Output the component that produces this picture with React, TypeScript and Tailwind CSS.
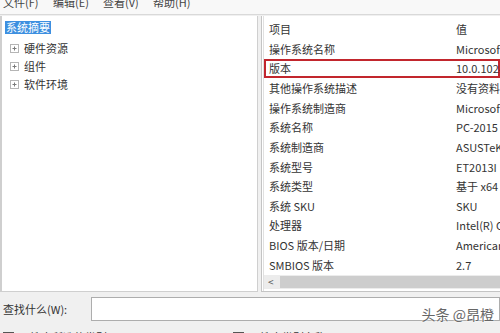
const menus = ["文件(F)", "编辑(E)", "查看(V)", "帮助(H)"];

const treeItems = ["硬件资源", "组件", "软件环境"];

const rows: [string, string][] = [
  ["操作系统名称", "Microsoft Windows 10 专业版"],
  ["版本", "10.0.10240 版本 10240"],
  ["其他操作系统描述", "没有资料"],
  ["操作系统制造商", "Microsoft Corporation"],
  ["系统名称", "PC-2015"],
  ["系统制造商", "ASUSTeK COMPUTER INC."],
  ["系统型号", "ET2013I"],
  ["系统类型", "基于 x64 的电脑"],
  ["系统 SKU", "SKU"],
  ["处理器", "Intel(R) Core(TM)"],
  ["BIOS 版本/日期", "American Megatrends"],
  ["SMBIOS 版本", "2.7"],
];

function PlusBox() {
  return (
    <svg width="9" height="9" viewBox="0 0 9 9" className="shrink-0">
      <rect x="0.5" y="0.5" width="8" height="8" fill="#fff" stroke="#b5b5b5" />
      <path d="M2.5 4.5h4M4.5 2.5v4" stroke="#7a7a7a" strokeWidth="1" />
    </svg>
  );
}

export default function App() {
  return (
    <div
      className="flex h-[333px] w-[500px] flex-col overflow-hidden bg-[#f0f0f0] text-[11px] text-[#333]"
      style={{ fontFamily: '"Noto Sans CJK SC", "Liberation Sans", sans-serif' }}
    >
      {/* menu bar, top half cut off */}
      <div className="flex h-[15px] shrink-0 items-start overflow-hidden border-b border-[#d9d9d9] bg-[#f8f8f8] pl-[3px]">
        {menus.map((m) => (
          <span key={m} className="mt-[-5px] w-[50px] leading-[14px] text-[#444]">
            {m}
          </span>
        ))}
      </div>

      <div className="flex h-[277px] shrink-0 gap-[3px] pt-[1px]">
        {/* tree */}
        <div className="w-[258px] shrink-0 border-l-2 border-r border-b border-[#cfcfcf] bg-white pl-[3px] pt-[5px]">
          <div className="w-fit bg-[#3d8fe0] px-[1px] leading-[13px] text-white">系统摘要</div>
          <div className="mt-[5px] flex flex-col">
            {treeItems.map((t) => (
              <div key={t} className="flex h-[18px] items-center gap-[5px] pl-[5px]">
                <PlusBox />
                <span>{t}</span>
              </div>
            ))}
          </div>
        </div>

        {/* list */}
        <div className="flex flex-1 flex-col overflow-hidden border-l border-b border-[#c4c4c4] bg-white pl-[1px]">
          <div className="flex flex-1 flex-col border-l border-[#e0e0e0] pt-[3px]">
            <div className="flex h-[20px] shrink-0 items-center">
              <span className="w-[192px] shrink-0 pl-[5px]">项目</span>
              <span className="whitespace-nowrap">值</span>
            </div>
            {rows.map(([k, v], i) => (
              <div
                key={k}
                className={`flex h-[19.67px] shrink-0 items-center whitespace-nowrap ${
                  i === 1 ? "ring-2 ring-inset ring-[#c2262d]" : ""
                }`}
              >
                <span className="w-[192px] shrink-0 pl-[5px]">{k}</span>
                <span>{v}</span>
              </div>
            ))}
            <div className="mt-auto mb-[2px] flex h-[14px] shrink-0 items-center bg-[#ececec]">
              <span className="w-[16px] pl-[4px] text-[10px] leading-none text-[#555]">&lt;</span>
              <div className="h-[12px] flex-1 bg-[#cdcdcd]" />
            </div>
          </div>
        </div>
      </div>

      {/* search row */}
      <div className="relative flex h-[30px] shrink-0 items-center gap-[10px] pl-[3px] pt-[4px]">
        <span className="w-[78px] shrink-0">查找什么(W):</span>
        <div className="h-[24px] flex-1 border border-[#adadad] bg-white" />
        <span
          className="absolute right-[6px] top-[12px] text-[14px] text-[#666]"
          style={{ textShadow: "0 0 2px #fff, 0 0 2px #fff" }}
        >
          头条 @昂橙
        </span>
      </div>

      {/* checkbox row */}
      <div className="flex shrink-0 items-start pl-[3px] pt-[7px]">
        <div className="flex w-[230px] items-center gap-[5px]">
          <div className="h-[11px] w-[11px] border border-[#555] bg-white" />
          <span>只搜索所选的类别(S)</span>
        </div>
        <div className="flex items-center gap-[5px]">
          <div className="h-[11px] w-[11px] border border-[#555] bg-white" />
          <span>只搜索类别名称(R)</span>
        </div>
      </div>
    </div>
  );
}
